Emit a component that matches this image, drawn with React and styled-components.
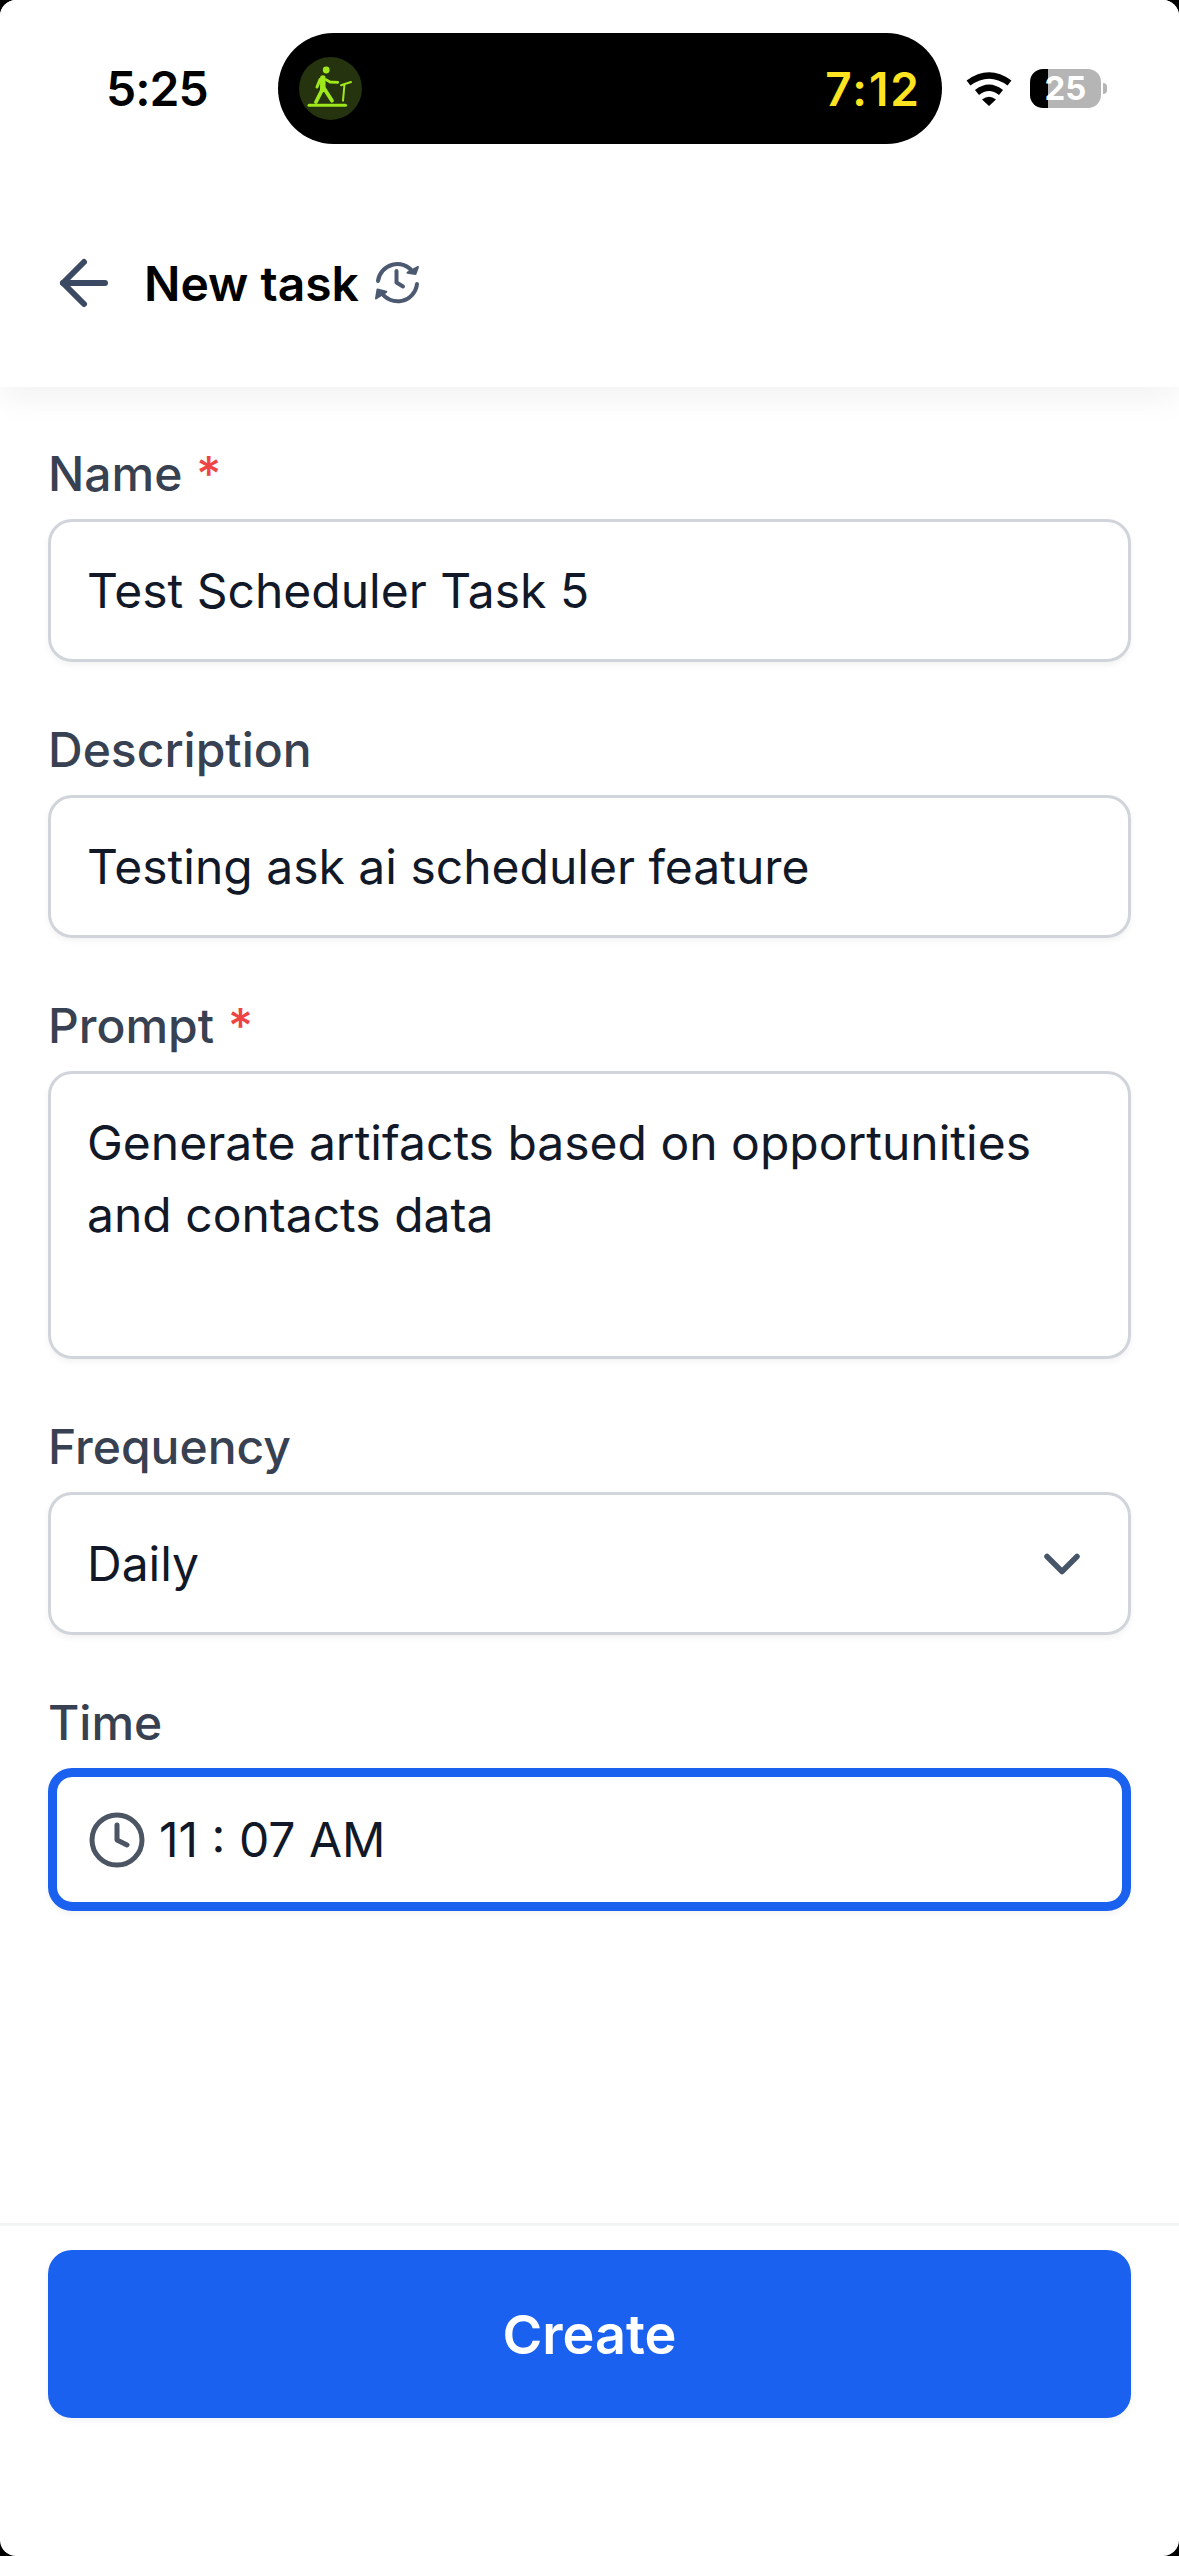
import React from "react";
import styled, { createGlobalStyle } from "styled-components";
import { ArrowLeft, ChevronDown, Clock } from "lucide-react";

const GlobalStyle = createGlobalStyle`
  html, body {
    margin: 0;
    padding: 0;
    background: #000;
  }
  * {
    box-sizing: border-box;
  }
`;

const Screen = styled.div`
  width: 1179px;
  height: 2556px;
  background: #fff;
  border-radius: 16px;
  overflow: hidden;
  display: flex;
  flex-direction: column;
  font-family: Inter, "Liberation Sans", sans-serif;
`;

const Top = styled.header`
  height: 387px;
  background: #fff;
  box-shadow: 0 12px 30px rgba(0, 0, 0, 0.05);
  position: relative;
  flex: none;
`;

const StatusBar = styled.div`
  display: flex;
  align-items: center;
  padding-top: 33px;
  height: 144px;
`;

const StatusTime = styled.div`
  width: 278px;
  padding-left: 106px;
  font-size: 48px;
  font-weight: 600;
  letter-spacing: -1px;
  color: #000;
`;

const Island = styled.div`
  width: 664px;
  height: 111px;
  border-radius: 56px;
  background: #000;
  display: flex;
  align-items: center;
  justify-content: space-between;
  padding: 0 21px 0 21px;
`;

const ActivityBadge = styled.div`
  width: 63px;
  height: 63px;
  border-radius: 50%;
  background: #25330e;
`;

const Timer = styled.div`
  font-size: 46px;
  font-weight: 600;
  letter-spacing: 2px;
  color: #fde320;
`;

const WifiIcon = styled.svg`
  margin-left: 24px;
  flex: none;
`;

const Battery = styled.div`
  margin-left: 17px;
  width: 71px;
  height: 39px;
  border-radius: 13px;
  background: linear-gradient(90deg, #000 18px, #b5b5b5 18px);
  color: #fff;
  font-size: 33px;
  font-weight: 700;
  line-height: 39px;
  text-align: center;
  position: relative;

  &::after {
    content: "";
    position: absolute;
    left: 73px;
    top: 14px;
    width: 4px;
    height: 11px;
    border-radius: 0 6px 6px 0;
    background: #b5b5b5;
  }
`;

const TitleRow = styled.div`
  display: flex;
  align-items: center;
  height: 72px;
  margin-top: 103px;
  padding-left: 48px;
`;

const BackIcon = styled(ArrowLeft)`
  color: #3b4a62;
  flex: none;
`;

const Title = styled.h1`
  margin: 0 0 0 24px;
  font-size: 48px;
  font-weight: 600;
  color: #000;
`;

const HistoryIcon = styled.svg`
  margin-left: 17px;
  flex: none;
  overflow: visible;
`;

const Form = styled.main`
  flex: 1;
  display: flex;
  flex-direction: column;
  gap: 52px;
  padding: 51px 48px 0;
`;

const Field = styled.div`
  display: flex;
  flex-direction: column;
  gap: 9px;
`;

const Label = styled.div`
  font-size: 48px;
  line-height: 72px;
  font-weight: 500;
  color: #374151;
`;

const Required = styled.span`
  color: #ef4444;
  margin-left: 1px;
`;

const Input = styled.div`
  min-height: ${props => props.height || 143}px;
  border: ${props => (props.focused ? "9px solid #1a61f0" : "3px solid #d1d5db")};
  border-radius: 24px;
  background: #fff;
  box-shadow: 0 3px 6px rgba(0, 0, 0, 0.05);
  padding: ${props => (props.multiline ? "33px 36px" : "0 36px")};
  padding-left: ${props => (props.focused ? "30px" : "36px")};
  display: flex;
  align-items: ${props => (props.multiline ? "flex-start" : "center")};
  justify-content: ${props => (props.between ? "space-between" : "flex-start")};
  gap: 12px;
  font-size: 48px;
  line-height: 72px;
  color: #111827;
`;

const Chevron = styled(ChevronDown)`
  color: #475569;
  flex: none;
`;

const ClockIcon = styled(Clock)`
  color: #4b5563;
  flex: none;
`;

const Footer = styled.footer`
  height: 333px;
  flex: none;
  border-top: 3px solid #f3f4f6;
  padding: 24px 48px 0;
`;

const CreateButton = styled.button`
  width: 100%;
  height: 168px;
  border: none;
  border-radius: 24px;
  background: #1a61f0;
  color: #fff;
  font-family: inherit;
  font-size: 54px;
  font-weight: 600;
  box-shadow: 0 3px 6px rgba(0, 0, 0, 0.05);
`;

const Treadmill = () => (
  <svg width="63" height="63" viewBox="0 0 63 63" fill="none" stroke="#9fe81c" strokeLinecap="round" strokeLinejoin="round">
    <circle cx="27.2" cy="13" r="3.4" fill="#9fe81c" stroke="none" />
    <path d="M23.800 21v11.500" strokeWidth="5.500" />
    <path d="M27 22.600l4 2.400 7.800 .3" strokeWidth="2.800" />
    <path d="M21 22.600l-3 7.400" strokeWidth="3" />
    <path d="M23.500 32l-6.500 13M25.500 32l7.500 11.700" strokeWidth="3.800" />
    <path d="M10 48.300h36.500" strokeWidth="3" />
    <path d="M44 43.700l1.500-16.700M42 28.300l10-3.300" strokeWidth="2" />
  </svg>
);

const Wifi = () => (
  <WifiIcon width="47" height="35" viewBox="0 0 47 35" fill="none">
    <path d="M2.500 12Q23 -3 43.500 12" stroke="#000" strokeWidth="6.500" />
    <path d="M11 21.500Q23 12 35 21.500" stroke="#000" strokeWidth="6.500" />
    <path d="M16 28.500Q23 23 30 28.500L23 35z" fill="#000" />
  </WifiIcon>
);

const History = () => (
  <HistoryIcon width="44" height="44" viewBox="0 0 44 44" fill="none" stroke="#4b5a70" strokeWidth="4" strokeLinecap="round" strokeLinejoin="round">
    <path d="M2 20A19.500 19.500 0 0 1 37 11" />
    <path d="M41 23A19.500 19.500 0 0 1 5 31" />
    <path d="M42 6l-2.500 7-8-1.300z" fill="#4b5a70" strokeWidth="2" />
    <path d="M0 37.500l1.500-9 8.800 2.300z" fill="#4b5a70" strokeWidth="2" />
    <path d="M20.500 10v11.500l6.500 4" />
  </HistoryIcon>
);

const App = () => (
  <>
    <GlobalStyle />
    <Screen>
      <Top>
        <StatusBar>
          <StatusTime>5:25</StatusTime>
          <Island>
            <ActivityBadge>
              <Treadmill />
            </ActivityBadge>
            <Timer>7:12</Timer>
          </Island>
          <Wifi />
          <Battery>25</Battery>
        </StatusBar>
        <TitleRow>
          <BackIcon size={72} strokeWidth={2} />
          <Title>New task</Title>
          <History />
        </TitleRow>
      </Top>
      <Form>
        <Field>
          <Label>
            Name <Required>*</Required>
          </Label>
          <Input>Test Scheduler Task 5</Input>
        </Field>
        <Field>
          <Label>Description</Label>
          <Input>Testing ask ai scheduler feature</Input>
        </Field>
        <Field>
          <Label>
            Prompt <Required>*</Required>
          </Label>
          <Input multiline height={288}>
            Generate artifacts based on opportunities and contacts data
          </Input>
        </Field>
        <Field>
          <Label>Frequency</Label>
          <Input between>
            Daily
            <Chevron size={60} strokeWidth={2.2} />
          </Input>
        </Field>
        <Field>
          <Label>Time</Label>
          <Input focused>
            <ClockIcon size={60} strokeWidth={2} />
            11 : 07 AM
          </Input>
        </Field>
      </Form>
      <Footer>
        <CreateButton>Create</CreateButton>
      </Footer>
    </Screen>
  </>
);

export default App;
